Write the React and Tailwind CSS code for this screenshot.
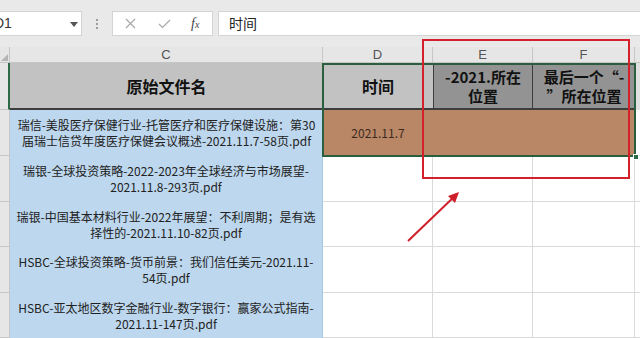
import React from 'react';

const cjk = "font-['Noto_Sans_CJK_SC','Noto_Sans',sans-serif]";

const files = [
  ['瑞银-全球投资策略-2022-2023年全球经济与市场展望-', '2021.11.8-293页.pdf'],
  ['瑞银-中国基本材料行业-2022年展望：不利周期；是有选', '择性的-2021.11.10-82页.pdf'],
  ['HSBC-全球投资策略-货币前景：我们信任美元-2021.11-', '54页.pdf'],
  ['HSBC-亚太地区数字金融行业-数字银行：赢家公式指南-', '2021.11-147页.pdf'],
];

const rowHeights = ['h-[46px]', 'h-[45px]', 'h-[46px]', 'h-[45px]'];

const FormulaBar = () => (
  <div className="h-[47px] pt-[11px] flex items-start">
    <div className="w-[82px] h-[25px] bg-white border-y border-r border-[#d4d4d4] flex items-center relative overflow-hidden">
      <span className="ml-[-6px] text-[14px] text-[#333] font-['Liberation_Sans',sans-serif]">D1</span>
      <div className="absolute left-[70px] top-[10px] w-0 h-0 border-l-[4px] border-r-[4px] border-t-[5px] border-l-transparent border-r-transparent border-t-[#555]" />
    </div>
    <div className="w-[30px] h-[25px] flex flex-col items-center justify-center gap-[2px]">
      <span className="w-[2px] h-[2px] bg-[#9a9a9a]" />
      <span className="w-[2px] h-[2px] bg-[#9a9a9a]" />
      <span className="w-[2px] h-[2px] bg-[#9a9a9a]" />
    </div>
    <div className="w-[101px] h-[25px] bg-white border border-[#d4d4d4] flex items-center">
      <svg className="ml-[12px]" width="11" height="11" viewBox="0 0 11 11">
        <path d="M1 1L10 10M10 1L1 10" stroke="#a8a8a8" strokeWidth="1.2" fill="none" />
      </svg>
      <svg className="ml-[22px]" width="13" height="10" viewBox="0 0 13 10">
        <path d="M1 5L4.5 8.5L12 1" stroke="#a8a8a8" strokeWidth="1.2" fill="none" />
      </svg>
      <span className="ml-[20px] text-[14px] italic text-[#444] font-['Liberation_Serif',serif]">f<span className="text-[10px]">x</span></span>
    </div>
    <div className="ml-[5px] flex-1 h-[25px] bg-white border-y border-l border-[#d4d4d4] flex items-center pl-[10px]">
      <span className={`text-[14px] text-[#222] ${cjk}`}>时间</span>
    </div>
  </div>
);

const ColHead = ({ label, cls = '' }) => (
  <div className={`h-[16px] bg-[#e6e6e6] border-r border-b border-[#c6c6c6] flex items-center justify-center text-[13px] text-[#555] font-['Liberation_Sans',sans-serif] ${cls}`}>
    {label}
  </div>
);

export default function App() {
  return (
    <div className="w-[640px] h-[338px] overflow-hidden bg-[#e9e9e9] relative">
      <FormulaBar />

      <div className="grid grid-cols-[10px_313px_110px_100px_102px_5px]">
        {/* column headers */}
        <div className="h-[16px] bg-[#e6e6e6] border-r border-b border-[#c6c6c6] relative">
          <div className="absolute right-[1px] bottom-[1px] w-0 h-0 border-l-[7px] border-t-[7px] border-l-transparent border-t-transparent border-b-0 border-r-[7px] border-r-[#b5b5b5]" />
        </div>
        <ColHead label="C" />
        <ColHead label="D" />
        <ColHead label="E" />
        <ColHead label="F" />
        <ColHead label="" cls="border-r-0" />

        {/* header row */}
        <div className="h-[47px] bg-[#e6e6e6] border-r-2 border-r-[#2a6a45] border-b border-b-[#c6c6c6]" />
        <div className={`h-[47px] bg-[#c2c2c2] border-b-2 border-[#3d3d3d] flex items-center justify-center text-[16px] font-bold text-[#111] ${cjk}`}>
          原始文件名
        </div>
        <div className={`h-[47px] bg-[#c2c2c2] border-b-2 border-[#3d3d3d] flex items-center justify-center text-[16px] font-bold text-[#111] ${cjk}`}>
          时间
        </div>
        <div className={`h-[47px] bg-[#939393] border-l border-r border-b-2 border-[#3d3d3d] flex flex-col items-center justify-center leading-[19px] text-[15px] font-bold text-[#111] ${cjk}`}>
          <span>-2021.所在</span>
          <span>位置</span>
        </div>
        <div className={`h-[47px] bg-[#939393] border-b-2 border-[#3d3d3d] flex flex-col items-center justify-center leading-[19px] text-[15px] font-bold text-[#111] ${cjk}`}>
          <span className="whitespace-nowrap">最后一个“-</span>
          <span className="whitespace-nowrap">”所在位置</span>
        </div>
        <div className="h-[47px] bg-[#e0e0e0]" />

        {/* first data row */}
        <div className="h-[46px] bg-[#e6e6e6] border-r border-b border-[#c6c6c6]" />
        <div className={`h-[46px] bg-[#bdd7ee] flex flex-col items-center justify-center leading-[16px] text-[12px] text-[#222] ${cjk}`}>
          <span className="whitespace-nowrap">瑞信-美股医疗保健行业-托管医疗和医疗保健设施：第30</span>
          <span className="whitespace-nowrap">届瑞士信贷年度医疗保健会议概述-2021.11.7-58页.pdf</span>
        </div>
        <div className={`h-[46px] bg-[#ba8766] flex items-center justify-center text-[12px] text-[#3a2a20] ${cjk}`}>
          2021.11.7
        </div>
        <div className="h-[46px] bg-[#ba8766]" />
        <div className="h-[46px] bg-[#ba8766]" />
        <div className="h-[46px] bg-white border-b border-[#dadada]" />

        {files.map((f, i) => (
          <React.Fragment key={i}>
            <div className={`${rowHeights[i]} bg-[#e6e6e6] border-r border-b border-[#c6c6c6]`} />
            <div className={`${rowHeights[i]} bg-[#bdd7ee] border-r border-[#a9c8e6] flex flex-col items-center justify-center leading-[16px] text-[12px] text-[#222] ${cjk}`}>
              <span className="whitespace-nowrap">{f[0]}</span>
              <span className="whitespace-nowrap">{f[1]}</span>
            </div>
            <div className={`${rowHeights[i]} bg-white border-r border-b border-[#dadada]`} />
            <div className={`${rowHeights[i]} bg-white border-r border-b border-[#dadada]`} />
            <div className={`${rowHeights[i]} bg-white border-r border-b border-[#dadada]`} />
            <div className={`${rowHeights[i]} bg-white border-b border-[#dadada]`} />
          </React.Fragment>
        ))}
      </div>

      {/* selection D1:F2 */}
      <div className="absolute left-[322px] top-[63px] w-[314px] h-[94px] border-2 border-[#2a5e3f] pointer-events-none" />
      <div className="absolute left-[633px] top-[154px] w-[6px] h-[6px] bg-[#2a6a45] border border-white" />

      {/* red highlight box */}
      <div className="absolute left-[422px] top-[39px] w-[208px] h-[140px] border-2 border-[#d3202b] pointer-events-none" />

      {/* red arrow */}
      <svg className="absolute left-0 top-0 pointer-events-none" width="640" height="338" viewBox="0 0 640 338">
        <path d="M408 241 L457 194" stroke="#cf1f2a" strokeWidth="2" fill="none" />
        <path d="M459 192 L448 196 L455 203 Z" fill="#cf1f2a" />
      </svg>
    </div>
  );
}
